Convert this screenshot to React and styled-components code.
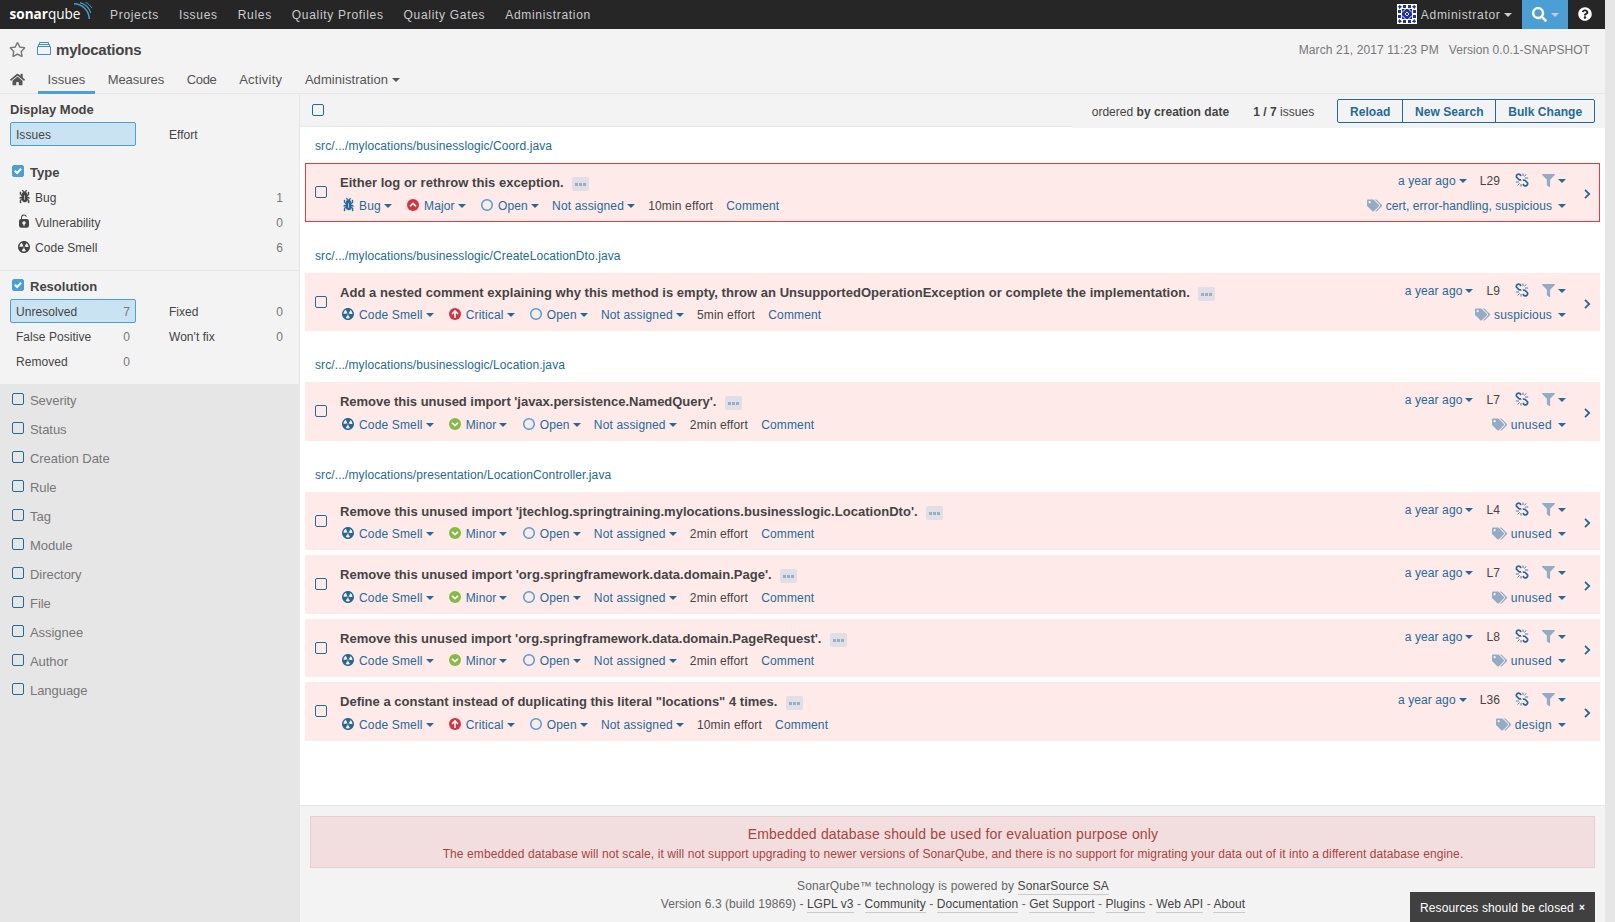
import React from 'react';
import styled, { createGlobalStyle } from 'styled-components';
import { FaHome, FaRegStar, FaSearch, FaQuestionCircle, FaFilter, FaTags } from 'react-icons/fa';

const blue = '#236a97';
const lightBlue = '#4b9fd5';
const line = '#e6e6e6';
const pale = '#f3f3f3';

const GlobalStyle = createGlobalStyle`
  * { box-sizing: border-box; }
  html, body { margin: 0; padding: 0; background: ${line}; }
  body {
    font-family: "Liberation Sans", Arial, Helvetica, sans-serif;
    font-size: 12px;
    line-height: 16px;
    color: #444;
    overflow: hidden;
  }
  svg { display: block; flex: none; }
  a { color: inherit; text-decoration: none; }
`;

const Page = styled.div`
  width: 1605px;
  height: 922px;
  display: flex;
  flex-direction: column;
  background: ${pale};
`;

const Tracked = styled.span`
  letter-spacing: ${(p) => p.$ls}px;
`;

/* ---------- top bar ---------- */

const TopBar = styled.nav`
  height: 29px;
  flex: none;
  display: flex;
  align-items: stretch;
  background: #262626;
  color: #ccc;
`;

const Brand = styled.a`
  width: 100px;
  padding-left: 9px;
`;

const TopLink = styled.a`
  padding: 7px 10px 0;
  line-height: 16px;
  letter-spacing: 0.69px;
`;

const TopRight = styled.div`
  display: flex;
  margin-left: auto;
`;

const UserMenu = styled.a`
  display: flex;
  padding: 4px 10.5px 0 0;
  letter-spacing: 0.69px;
`;

const UserName = styled.span`
  padding: 3px 3px 0 4px;
`;

const Caret = styled.i`
  flex: none;
  width: 0;
  height: 0;
  border-style: solid;
  border-width: 4px 4px 0;
  border-color: currentColor transparent transparent;
  margin-left: ${(p) => p.$gap ?? 3}px;
  margin-top: ${(p) => p.$top ?? 6}px;
`;

const SearchButton = styled.a`
  display: flex;
  width: 46px;
  padding: 7px 0 0 10px;
  background: ${lightBlue};
  color: #ccc;
  svg { color: #fff; }
`;

const HelpButton = styled.a`
  width: 37px;
  padding: 7px 0 0 10px;
  color: #fff;
`;

/* ---------- project header ---------- */

const Header = styled.header`
  height: 65px;
  flex: none;
  display: flex;
  flex-direction: column;
  justify-content: space-between;
  border-bottom: 1px solid ${line};
`;

const HeaderTop = styled.div`
  display: flex;
  height: 34px;
  padding: 12px 15px 0 9px;
`;

const ProjectMark = styled.span`
  margin: 1px 0 0 11px;
`;

const ProjectName = styled.h1`
  margin: 0 0 0 5px;
  font-size: 15px;
  line-height: 18px;
  letter-spacing: -0.2px;
`;

const ProjectMeta = styled.div`
  display: flex;
  gap: 10px;
  margin-left: auto;
  padding-top: 1px;
  color: #777;
`;

const Tabs = styled.div`
  display: flex;
  margin-bottom: -1px;
  font-size: 13px;
  color: #555;
`;

const Tab = styled.a`
  display: flex;
  height: 27px;
  padding: 5px 10px 0;
  margin-right: 2.6px;
  letter-spacing: ${(p) => p.$ls ?? 0}px;
  border-bottom: 3px solid ${(p) => (p.$active ? lightBlue : 'transparent')};
`;

/* ---------- body ---------- */

const Body = styled.div`
  flex: 1;
  min-height: 0;
  display: flex;
`;

const Sidebar = styled.aside`
  width: 300px;
  flex: none;
  border-right: 1px solid ${line};
  background: ${line};
`;

const Facet = styled.section`
  background: ${pale};
  padding: ${(p) => p.$pad};
  border-bottom: ${(p) => (p.$line ? `1px solid ${line}` : 'none')};
`;

const FacetHead = styled.div`
  display: flex;
  padding-left: ${(p) => (p.$plain ? 0 : 2)}px;
  font-size: 13px;
  font-weight: bold;
`;

const FacetLabel = styled.span`
  margin-left: ${(p) => (p.$plain ? 0 : 6)}px;
  line-height: 15px;
`;

const Check = styled.span`
  width: 12px;
  height: 12px;
  flex: none;
  display: block;
  border: 1px solid ${(p) => (p.$on ? lightBlue : blue)};
  border-radius: 2px;
  background: ${(p) => (p.$on ? lightBlue : 'transparent')};
`;

const OptionGrid = styled.div`
  display: grid;
  grid-template-columns: 126px 126px;
  column-gap: 27px;
  row-gap: 1px;
  margin-top: 5px;
`;

const OptionList = styled.div`
  display: grid;
  row-gap: 1px;
  margin-top: 5px;
`;

const Option = styled.a`
  display: flex;
  height: 24px;
  padding: 4px 5px 0;
  border: 1px solid ${(p) => (p.$active ? lightBlue : 'transparent')};
  border-radius: 2px;
  background: ${(p) => (p.$active ? '#cae3f2' : 'transparent')};
  letter-spacing: 0.04px;
  svg { margin: -1px 3px 0 0; }
`;

const Count = styled.span`
  margin-left: auto;
  color: #777;
`;

const ClosedFacet = styled.a`
  display: flex;
  height: 29px;
  padding: 9px 0 0 12px;
  font-size: 13px;
  letter-spacing: -0.05px;
  color: #777;
`;

const Content = styled.main`
  flex: 1;
  min-width: 0;
  display: flex;
  flex-direction: column;
  background: #fff;
`;

const Toolbar = styled.div`
  height: 34px;
  flex: none;
  display: flex;
  justify-content: space-between;
  background: linear-gradient(${pale}, ${pale}) 0 0 / 100% 32px no-repeat,
    linear-gradient(${line}, ${line}) 0 32px / 100% 1px no-repeat;
  padding-left: 12px;
  > ${Check} { margin-top: 10px; }
`;

const ToolbarRight = styled.div`
  display: flex;
  padding: 5px 10px 0 20px;
  background: ${pale};
`;

const ToolbarText = styled.span`
  padding-top: 5px;
  margin-right: ${(p) => p.$gap}px;
  letter-spacing: 0.03px;
`;

const ButtonGroup = styled.div`
  display: flex;
  height: 24px;
  border: 1px solid ${blue};
  border-radius: 2px;
`;

const Button = styled.a`
  padding: 4px 11.8px 0;
  color: ${blue};
  font-weight: bold;
  letter-spacing: 0.06px;
  & + & { border-left: 1px solid ${blue}; }
`;

const GroupPath = styled.a`
  display: block;
  height: ${(p) => p.$h}px;
  padding: ${(p) => p.$h - 25}px 0 0 15px;
  letter-spacing: 0.097px;
  color: ${blue};
`;

const IssueRow = styled.article`
  display: flex;
  height: ${(p) => p.$h}px;
  margin: 0 5px ${(p) => p.$mb ?? 0}px;
  padding: 0 9px;
  border: 1px solid ${(p) => (p.$selected ? '#dd4040' : 'transparent')};
  background: #ffeaea;
  > ${Check} { margin-top: 22px; }
`;

const IssueMain = styled.div`
  flex: 1;
  display: flex;
  flex-direction: column;
  justify-content: space-between;
  padding: 11px 0 7px 13px;
`;

const IssueTitle = styled.div`
  display: flex;
  font-size: 13px;
  line-height: 15px;
  font-weight: bold;
  letter-spacing: ${(p) => p.$ls ?? 0}px;
`;

const More = styled.span`
  display: flex;
  align-items: center;
  justify-content: center;
  gap: 1px;
  width: 17px;
  height: 14px;
  margin: 2px 0 0 8.5px;
  border-radius: 2px;
  background: #e1dfe5;
  i { width: 3px; height: 3px; background: #93b0c7; margin-top: 1px; }
`;

const Metas = styled.div`
  display: flex;
  gap: 13.2px;
  color: ${blue};
  letter-spacing: 0.15px;
`;

const Meta = styled.span`
  display: flex;
  color: ${(p) => (p.$plain ? '#444' : 'inherit')};
`;

const MetaIcon = styled.span`
  width: 16px;
  margin: -1px 3px 0 0;
`;

const IssueSide = styled.div`
  display: flex;
  flex-direction: column;
  justify-content: space-between;
  align-items: flex-end;
  padding: 9px 0 7px;
  color: ${blue};
`;

const SideLine = styled.div`
  display: flex;
  letter-spacing: ${(p) => p.$ls ?? 0.1}px;
`;

const LineNumber = styled.span`
  color: #444;
  margin: 0 15px 0 13px;
`;

const Faded = styled.span`
  color: #91adc5;
  margin: ${(p) => p.$m};
`;

const OpenArrow = styled.span`
  width: 6px;
  margin: 25px 0 0 18px;
  color: ${blue};
`;

const Footer = styled.footer`
  margin-top: auto;
  height: 117px;
  padding: 10px 10px 0;
  background: ${pale};
  border-top: 1px solid ${line};
  text-align: center;
`;

const Alert = styled.div`
  height: 52px;
  padding-top: 7px;
  background: #f2dede;
  border: 1px solid #ebccd1;
  color: #a94442;
  margin-bottom: 9px;
`;

const AlertTitle = styled.div`
  font-size: 14px;
  line-height: 20px;
  letter-spacing: 0.175px;
  padding-left: 1px;
  margin-bottom: 1px;
`;

const AlertText = styled.div`
  line-height: 18px;
  letter-spacing: 0.092px;
  padding-left: 1px;
`;

const FootLine = styled.div`
  line-height: 18px;
  letter-spacing: ${(p) => p.$ls}px;
  padding-left: 1px;
  color: #666;
  a { color: #444; border-bottom: 1px solid #cacaca; padding-bottom: 1px; }
`;

const Toast = styled.div`
  position: fixed;
  left: 1410px;
  bottom: 0;
  width: 185px;
  height: 30px;
  padding: 8px 0 0 10px;
  background: #404040;
  color: #fff;
  display: flex;
  gap: 5px;
  letter-spacing: 0.12px;
  b { font-size: 10px; }
`;

/* ---------- drawings ---------- */

const Logo = () => (
  <svg width="84" height="29" viewBox="0 0 84 29">
    <text x="0.5" y="19" fontFamily="Open Sans" fontSize="14.5" fontWeight="400" fill="#fff" textLength="71" lengthAdjust="spacingAndGlyphs">
      <tspan fontWeight="700">sonar</tspan>qube
    </text>
    <g fill="none" stroke="#4b9fd5">
      <path d="M65 3.7c7.500 0 15 6.500 15.300 15.300" strokeWidth="1.500" />
      <path d="M71 2.600c5 1.500 9.300 5.500 10.700 10.200" strokeWidth="1.200" />
      <path d="M76.500 2.300c2.600 1.200 5 3.400 6.200 5.800" strokeWidth="1" />
    </g>
  </svg>
);

const Avatar = () => (
  <svg width="20" height="20" viewBox="0 0 20 20">
    <rect width="20" height="20" fill="#fff" />
    <g fill="#1f2fb5">
      <path d="M1 2.500L2.500 1 5 2.500 2.500 5zM19 2.500L17.500 1 15 2.500 17.500 5zM1 17.500L2.500 19 5 17.500 2.500 15zM19 17.500L17.500 19 15 17.500 17.500 15z" />
      <path d="M6 1h3v3H6zM11 1h3v3h-3zM6 16h3v3H6zM11 16h3v3h-3zM1 6h3v3H1zM1 11h3v3H1zM16 6h3v3h-3zM16 11h3v3h-3z" />
      <rect x="5" y="5" width="10" height="10" />
    </g>
    <path d="M5 8.500L8.500 5M11.500 5L15 8.500M5 11.500L8.500 15M11.500 15l3.500-3.500M8 10l2-2 2 2-2 2z" fill="none" stroke="#fff" strokeWidth=".9" />
  </svg>
);

const ProjectIcon = () => (
  <svg width="14" height="14" viewBox="0 0 14 14" fill="none" stroke="#3a91cc">
    <path d="M.5 4.500h13v8H.5zM1.500 4.500v-2h11v2M2.500 2.500v-2h9v2" />
  </svg>
);

const Tick = () => (
  <svg width="10" height="10" viewBox="0 0 10 10" fill="none" stroke="#fff" strokeWidth="2">
    <path d="M1.800 4.700l2.300 2.300 4-4.200" />
  </svg>
);

const iconPaths = {
  bug: 'M11 9h1.3l.5.8.8-.5-.8-1.3H11v-.3l2-2.300V3h-1v2l-1 1.200V5c-.1-.8-.7-1.500-1.400-1.900L11 1.800l-.7-.7-1.800 1.600-1.800-1.600-.7.7 1.500 1.300C6.700 3.500 6.100 4.200 6 5v1.100L5 5V3H4v2.300l2 2.300V8H4.200l-.7 1.200.8.5.4-.7H6v.3l-2 1.900V14h1v-2.400l1-1C6 12 7.100 13 8.400 13h.8c.7 0 1.400-.3 1.800-.9.3-.4.3-.9.2-1.400l.9.9V14h1v-2.800l-2-1.900V9zm-2 2H8V6h1v5z',
  lock: 'M10.800 5H6V3.900a2.280 2.280 0 0 1 2-2.500 2.220 2.220 0 0 1 1.800 1.200.48.48 0 0 0 .7.2.48.48 0 0 0 .1-.7A3 3 0 0 0 8 .4a3.340 3.340 0 0 0-3 3.500v1.200a2.160 2.160 0 0 0-2 2.100v4.400a2.220 2.220 0 0 0 2.200 2.200h5.600a2.220 2.220 0 0 0 2.200-2.200V7.200A2.220 2.220 0 0 0 10.800 5zm-2.200 5.500v1.200H7.400v-1.200a1.660 1.660 0 0 1-1.100-1.600A1.750 1.750 0 0 1 8 7.200a1.710 1.710 0 0 1 .6 3.300z',
  smell: 'M8 2C4.700 2 2 4.700 2 8s2.700 6 6 6 6-2.700 6-6-2.700-6-6-6zm-.5 5.500h.9v.9h-.9v-.9zm-3.800.2c-.1 0-.2-.1-.2-.2 0-.4.1-1.200.6-2S5.300 4.200 5.600 4c.2 0 .3 0 .3.1l1.300 2.300c0 .1 0 .2-.1.2-.1.2-.2.3-.3.5-.1.2-.2.4-.2.5 0 .1-.1.2-.2.2l-2.700-.1zM9.900 12c-.3.2-1.100.5-2 .5-.9 0-1.700-.3-2-.5-.1 0-.1-.2-.1-.3l1.300-2.300c0-.1.1-.1.2-.1.2.1.3.1.5.1s.4 0 .5-.1c.1 0 .2 0 .2.1l1.300 2.300c.2.2.2.3.1.3zm2.500-4.100L9.700 8c-.1 0-.2-.1-.2-.2 0-.2-.1-.4-.2-.5 0-.1-.2-.3-.3-.4-.1 0-.1-.1 0-.2l1.300-2.300c.1-.1.2-.1.3-.1.3.2.9.7 1.300 1.500s.5 1.600.5 2c.1 0 .1.1 0 .1z',
};

const TypeIcon = ({ name }) => (
  <svg width="16" height="16" viewBox="0 0 16 16" fill="currentColor" stroke="currentColor" strokeWidth={name === 'bug' ? 0.4 : 0}>
    <path d={iconPaths[name]} />
  </svg>
);

const severities = {
  Major: { fill: '#d4333f', d: 'M5 9.300L8 6.400l3 2.900' },
  Critical: { fill: '#d4333f', d: 'M8 12V5M5 8l3-3 3 3' },
  Minor: { fill: '#85bb43', d: 'M5 6.800l3 2.900 3-2.900' },
};

const SeverityIcon = ({ name }) => (
  <svg width="16" height="16" viewBox="0 0 16 16">
    <circle cx="8" cy="8" r="6" fill={severities[name].fill} />
    <path d={severities[name].d} fill="none" stroke="#fff" strokeWidth="1.600" />
  </svg>
);

const OpenIcon = () => (
  <svg width="16" height="16" viewBox="0 0 16 16">
    <circle cx="8" cy="8" r="5.300" fill="none" stroke="#4b9fd5" strokeWidth="1.500" />
  </svg>
);

const BrokenLink = () => (
  <svg width="14" height="14" viewBox="0 0 14 14" fill="none" stroke="currentColor">
    <path d="M6.200 2.800L4.800 1.500Q3.500.5 2.200 1.700T1.600 4.300L3.900 6.600Q5 7.300 6.200 6.700M7.800 11.200l1.400 1.300q1.300 1 2.600-.2t.6-2.600L10.100 7.400Q9 6.700 7.800 7.300" strokeWidth="1.700" />
    <path d="M8 3V.5M9.300 3.500l2-2.200M10 5h3.200M4 9H.8M4.700 10.300l-2.200 2.200M6 11v2.600" strokeWidth=".8" />
  </svg>
);

const Chevron = () => (
  <svg width="7" height="10" viewBox="0 0 7 10" fill="none" stroke="currentColor" strokeWidth="1.800">
    <path d="M1 .9L5.200 5 1 9.100" />
  </svg>
);

/* ---------- data ---------- */

const groups = [
  { path: 'src/.../mylocations/businesslogic/Coord.java', h: 35, issues: [
    { h: 59, ls: 0.03, tagLs: 0.07, selected: true, title: 'Either log or rethrow this exception.', type: 'Bug', sev: 'Major', effort: '10min effort', line: 'L29', tags: 'cert, error-handling, suspicious' },
  ] },
  { path: 'src/.../mylocations/businesslogic/CreateLocationDto.java', h: 51, issues: [
    { h: 58, ls: 0.033, tagLs: 0.2, title: 'Add a nested comment explaining why this method is empty, throw an UnsupportedOperationException or complete the implementation.', type: 'Code Smell', sev: 'Critical', effort: '5min effort', line: 'L9', tags: 'suspicious' },
  ] },
  { path: 'src/.../mylocations/businesslogic/Location.java', h: 51, issues: [
    { h: 59, ls: -0.02, tagLs: 0.3, title: "Remove this unused import 'javax.persistence.NamedQuery'.", type: 'Code Smell', sev: 'Minor', effort: '2min effort', line: 'L7', tags: 'unused' },
  ] },
  { path: 'src/.../mylocations/presentation/LocationController.java', h: 51, issues: [
    { h: 58, mb: 5, ls: 0.034, tagLs: 0.3, title: "Remove this unused import 'jtechlog.springtraining.mylocations.businesslogic.LocationDto'.", type: 'Code Smell', sev: 'Minor', effort: '2min effort', line: 'L4', tags: 'unused' },
    { h: 59, mb: 5, ls: 0.035, tagLs: 0.3, title: "Remove this unused import 'org.springframework.data.domain.Page'.", type: 'Code Smell', sev: 'Minor', effort: '2min effort', line: 'L7', tags: 'unused' },
    { h: 58, mb: 5, ls: 0.01, tagLs: 0.3, title: "Remove this unused import 'org.springframework.data.domain.PageRequest'.", type: 'Code Smell', sev: 'Minor', effort: '2min effort', line: 'L8', tags: 'unused' },
    { h: 59, ls: 0.015, tagLs: 0.3, title: 'Define a constant instead of duplicating this literal "locations" 4 times.', type: 'Code Smell', sev: 'Critical', effort: '10min effort', line: 'L36', tags: 'design' },
  ] },
];

const closedFacets = ['Severity', 'Status', 'Creation Date', 'Rule', 'Tag', 'Module', 'Directory', 'File', 'Assignee', 'Author', 'Language'];
const footLinks = ['LGPL v3', 'Community', 'Documentation', 'Get Support', 'Plugins', 'Web API', 'About'];

const Issue = ({ issue }) => (
  <IssueRow $h={issue.h} $mb={issue.mb} $selected={issue.selected}>
    <Check />
    <IssueMain>
      <IssueTitle $ls={issue.ls}>
        <span>{issue.title}</span>
        <More><i /><i /><i /></More>
      </IssueTitle>
      <Metas>
        <Meta><MetaIcon><TypeIcon name={issue.type === 'Bug' ? 'bug' : 'smell'} /></MetaIcon>{issue.type}<Caret /></Meta>
        <Meta><MetaIcon><SeverityIcon name={issue.sev} /></MetaIcon>{issue.sev}<Caret /></Meta>
        <Meta><MetaIcon><OpenIcon /></MetaIcon>Open<Caret /></Meta>
        <Meta>Not assigned<Caret /></Meta>
        <Meta $plain>{issue.effort}</Meta>
        <Meta>Comment</Meta>
      </Metas>
    </IssueMain>
    <IssueSide>
      <SideLine>
        a year ago<Caret />
        <LineNumber>{issue.line}</LineNumber>
        <BrokenLink />
        <Faded $m="1px 0 0 13px"><FaFilter size={13} /></Faded>
        <Caret />
      </SideLine>
      <SideLine $ls={issue.tagLs}>
        <Faded $m="0 4px 0 0"><FaTags size={15} /></Faded>
        {issue.tags}<Caret $gap={6} />
      </SideLine>
    </IssueSide>
    <OpenArrow><Chevron /></OpenArrow>
  </IssueRow>
);

export default function App() {
  return (
    <Page>
      <GlobalStyle />
      <TopBar>
        <Brand><Logo /></Brand>
        {['Projects', 'Issues', 'Rules', 'Quality Profiles', 'Quality Gates', 'Administration'].map((t) => (
          <TopLink key={t}>{t}</TopLink>
        ))}
        <TopRight>
          <UserMenu><Avatar /><UserName>Administrator</UserName><Caret $gap={0} $top={9} /></UserMenu>
          <SearchButton><FaSearch size={15} /><Caret $gap={4} /></SearchButton>
          <HelpButton><FaQuestionCircle size={14} /></HelpButton>
        </TopRight>
      </TopBar>

      <Header>
        <HeaderTop>
          <FaRegStar size={17} color="#777" />
          <ProjectMark><ProjectIcon /></ProjectMark>
          <ProjectName>mylocations</ProjectName>
          <ProjectMeta>
            <Tracked $ls={0.13}>March 21, 2017 11:23 PM</Tracked>
            <Tracked $ls={0.05}>Version 0.0.1-SNAPSHOT</Tracked>
          </ProjectMeta>
        </HeaderTop>
        <Tabs>
          <Tab><FaHome size={15} /></Tab>
          <Tab $active>Issues</Tab>
          <Tab $ls={-0.1}>Measures</Tab>
          <Tab $ls={-0.3}>Code</Tab>
          <Tab $ls={0.25}>Activity</Tab>
          <Tab $ls={0.05}>Administration<Caret $gap={4} /></Tab>
        </Tabs>
      </Header>

      <Body>
        <Sidebar>
          <Facet $pad="8px 10px 19px">
            <FacetHead $plain><FacetLabel $plain>Display Mode</FacetLabel></FacetHead>
            <OptionGrid>
              <Option $active>Issues</Option>
              <Option>Effort</Option>
            </OptionGrid>
          </Facet>
          <Facet $pad="0 10px 11px" $line>
            <FacetHead><Check $on><Tick /></Check><FacetLabel>Type</FacetLabel></FacetHead>
            <OptionList>
              <Option><TypeIcon name="bug" />Bug<Count>1</Count></Option>
              <Option><TypeIcon name="lock" />Vulnerability<Count>0</Count></Option>
              <Option><TypeIcon name="smell" />Code Smell<Count>6</Count></Option>
            </OptionList>
          </Facet>
          <Facet $pad="8px 10px 11px">
            <FacetHead><Check $on><Tick /></Check><FacetLabel>Resolution</FacetLabel></FacetHead>
            <OptionGrid>
              <Option $active>Unresolved<Count>7</Count></Option>
              <Option>Fixed<Count>0</Count></Option>
              <Option>False Positive<Count>0</Count></Option>
              <Option>Won't fix<Count>0</Count></Option>
              <Option>Removed<Count>0</Count></Option>
            </OptionGrid>
          </Facet>
          {closedFacets.map((name) => (
            <ClosedFacet key={name}><Check /><FacetLabel>{name}</FacetLabel></ClosedFacet>
          ))}
        </Sidebar>

        <Content>
          <Toolbar>
            <Check />
            <ToolbarRight>
              <ToolbarText $gap={24}>ordered <b>by creation date</b></ToolbarText>
              <ToolbarText $gap={23}><b>1 / 7</b> issues</ToolbarText>
              <ButtonGroup>
                <Button>Reload</Button>
                <Button>New Search</Button>
                <Button>Bulk Change</Button>
              </ButtonGroup>
            </ToolbarRight>
          </Toolbar>
          {groups.map((g) => (
            <React.Fragment key={g.path}>
              <GroupPath $h={g.h}>{g.path}</GroupPath>
              {g.issues.map((i) => <Issue key={i.title} issue={i} />)}
            </React.Fragment>
          ))}
          <Footer>
            <Alert>
              <AlertTitle>Embedded database should be used for evaluation purpose only</AlertTitle>
              <AlertText>The embedded database will not scale, it will not support upgrading to newer versions of SonarQube, and there is no support for migrating your data out of it into a different database engine.</AlertText>
            </Alert>
            <FootLine $ls={0.14}>SonarQube™ technology is powered by <a>SonarSource SA</a></FootLine>
            <FootLine $ls={0.07}>
              Version 6.3 (build 19869)
              {footLinks.map((l) => <React.Fragment key={l}> - <a>{l}</a></React.Fragment>)}
            </FootLine>
          </Footer>
        </Content>
      </Body>
      <Toast><span>Resources should be closed</span><b>×</b></Toast>
    </Page>
  );
}
